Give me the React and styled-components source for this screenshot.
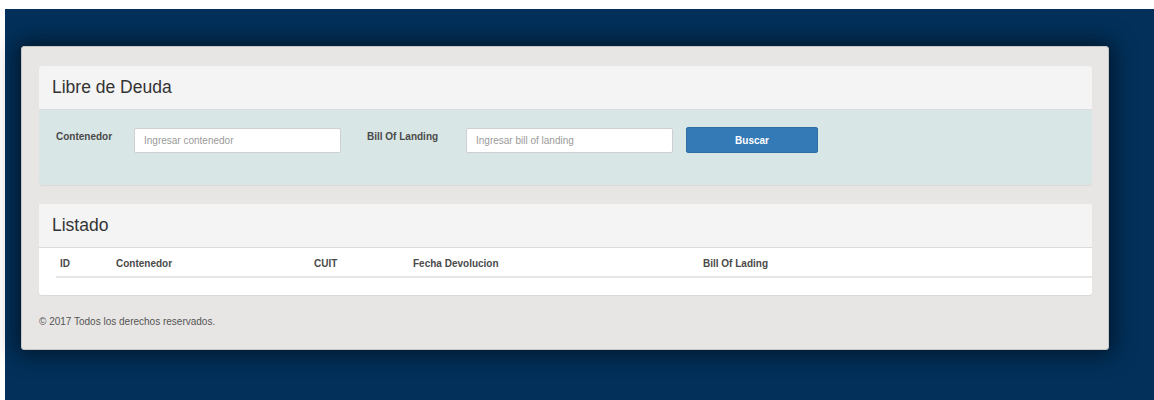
import React from 'react'
import styled, { createGlobalStyle } from 'styled-components'

const Global = createGlobalStyle`
  html, body {
    margin: 0;
    background: #ffffff;
    font-family: "Liberation Sans", Arial, sans-serif;
  }
`

const Page = styled.div`
  margin: 9px 0 0 5px;
  height: 391px;
  background: #02305a;
  padding: 37px 45px 0 16px;
  box-sizing: border-box;
`

const Card = styled.div`
  background: #e8e6e4;
  border-radius: 3px;
  border: 1px solid #c9c7c5;
  box-shadow: 0 0 22px 4px rgba(0, 0, 0, 0.55);
  padding: 19px 16px 0 17px;
`

const Panel = styled.section`
  background: ${p => p.$tint || '#ffffff'};
  border-radius: 3px;
  box-shadow: 0 1px 1px rgba(0, 0, 0, 0.06);
  margin-bottom: 19px;
  overflow: hidden;
`

const PanelHead = styled.div`
  height: 43px;
  background: #f4f4f4;
  border-bottom: 1px solid #dcdcdc;
  display: flex;
  align-items: center;
  padding: 0 13px;
`

const Title = styled.h3`
  margin: 0;
  font-size: 17.5px;
  font-weight: normal;
  color: #333;
`

const Form = styled.div`
  height: 75px;
  box-sizing: border-box;
  padding: 18px 17px 0;
  display: flex;
  align-items: flex-start;
`

const Label = styled.label`
  width: ${p => p.$w}px;
  padding-top: 3px;
  font-size: 10px;
  font-weight: bold;
  color: #4a4a4a;
`

const Input = styled.input`
  width: 207px;
  height: 25px;
  box-sizing: border-box;
  border: 1px solid #cfcfcf;
  border-radius: 2px;
  background: #fff;
  padding: 0 9px;
  font-family: inherit;
  font-size: 10px;
  margin-right: ${p => p.$gap}px;
  &::placeholder {
    color: #9a9a9a;
  }
`

const Button = styled.button`
  width: 132px;
  height: 26px;
  margin-top: -1px;
  border: 1px solid #2e6da4;
  border-radius: 2px;
  background: #337ab7;
  color: #fff;
  font-family: inherit;
  font-size: 10px;
  font-weight: bold;
`

const TableWrap = styled.div`
  padding: 0 0 17px 17px;
`

const Table = styled.table`
  width: 100%;
  border-collapse: collapse;
  table-layout: fixed;
`

/* fixed layout adds the 8px of side padding to each width */
const Th = styled.th`
  text-align: left;
  font-size: 10px;
  font-weight: bold;
  color: #4a4a4a;
  height: 26px;
  padding: 2px 4px 0;
  width: ${p => (p.$w ? `${p.$w - 8}px` : 'auto')};
  border-bottom: 2px solid #e6e6e6;
`

const Footer = styled.footer`
  line-height: 16px;
  padding-bottom: 19px;
  font-size: 10px;
  color: #555;
`

export default function App() {
  return (
    <>
      <Global />
      <Page>
        <Card>
          <Panel $tint="#d9e6e6">
            <PanelHead>
              <Title>Libre de Deuda</Title>
            </PanelHead>
            <Form>
              <Label $w={78}>Contenedor</Label>
              <Input placeholder="Ingresar contenedor" $gap={26} />
              <Label $w={99}>Bill Of Landing</Label>
              <Input placeholder="Ingresar bill of landing" $gap={13} />
              <Button>Buscar</Button>
            </Form>
          </Panel>
          <Panel>
            <PanelHead>
              <Title>Listado</Title>
            </PanelHead>
            <TableWrap>
              <Table>
                <thead>
                  <tr>
                    <Th $w={56}>ID</Th>
                    <Th $w={198}>Contenedor</Th>
                    <Th $w={99}>CUIT</Th>
                    <Th $w={290}>Fecha Devolucion</Th>
                    <Th>Bill Of Lading</Th>
                  </tr>
                </thead>
              </Table>
            </TableWrap>
          </Panel>
          <Footer>© 2017 Todos los derechos reservados.</Footer>
        </Card>
      </Page>
    </>
  )
}
